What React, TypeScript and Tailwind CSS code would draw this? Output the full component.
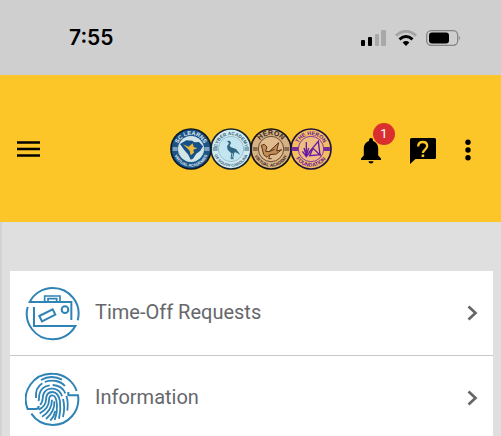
import React from "react";

type SealProps = {
  id: string;
  name: string;
  top: string;
  bottom: string;
  outer: string;
  band: string;
  center: string;
  ink: string;
  ring: string;
  topSize?: number;
  bottomSize?: number;
  children: React.ReactNode;
};

function Seal({ id, name, top, bottom, outer, band, center, ink, ring, topSize = 14, bottomSize = 11, children }: SealProps) {
  return (
    <svg viewBox="0 0 126 126" className="-mr-0.5 h-[42px] w-[42px] shrink-0" role="img" aria-label={name}>
      <defs>
        <path id={id + "-t"} d="M21 63a42 42 0 0 1 84 0" />
        <path id={id + "-b"} d="M10 63a53 53 0 0 0 106 0" />
      </defs>
      <circle cx="63" cy="63" r="60" fill={band} stroke={outer} strokeWidth="5" />
      <circle cx="63" cy="63" r="38" fill={center} stroke={ring} strokeWidth="2.5" />
      <path d="M8 60h15M8 66h15M103 60h15M103 66h15" stroke={ink} strokeWidth="3" />
      <g fill={ink} fontWeight="700" textAnchor="middle" className="font-['Liberation_Sans',sans-serif]">
        <text fontSize={topSize}>
          <textPath href={"#" + id + "-t"} startOffset="50%">{top}</textPath>
        </text>
        <text fontSize={bottomSize}>
          <textPath href={"#" + id + "-b"} startOffset="50%">{bottom}</textPath>
        </text>
      </g>
      {children}
    </svg>
  );
}

function Seals() {
  return (
    <div className="flex pr-0.5">
      <Seal id="sc" name="SC Learns" top="SC LEARNS" bottom="VIRTUAL ACADEMIES" outer="#0c1a2b" band="#1c5486" center="#d3e6e6" ink="#e0edf2" ring="#d5e6ef" topSize={17} bottomSize={12}>
        <path d="M30 48l19-11 18 1 6 5 14-1 12 13-8 13-12 9-10 15-7 3-7-15-13-15z" fill="#155088" />
        <path d="M39 49l17 7 12-10 3 11 11 4-12 4 2 9-10 8-3-14-8-8z" fill="#e9b83c" />
      </Seal>
      <Seal id="cy" name="Cyber Academy of South Carolina" top="CYBER ACADEMY" bottom="OF SOUTH CAROLINA" outer="#14242e" band="#d3eaf1" center="#c3e5f0" ink="#31637c" ring="#8fb9ca" topSize={14} bottomSize={12}>
        <path d="M42 44l12-6 6 1 3 6-4 8 4 5 15 5 13 17-14-7-9 3-6-2-9-9-2-10 6-9-5-6z" fill="#2d6480" />
        <path d="M66 74l-3 18h8M71 75l-3 15" fill="none" stroke="#2d6480" strokeWidth="3" />
      </Seal>
      <Seal id="he" name="Heron Virtual Academy" top="HERON" bottom="VIRTUAL ACADEMY" outer="#16120f" band="#d6b184" center="#dfbb8f" ink="#3d291c" ring="#4d3524" topSize={21} bottomSize={13}>
        <path d="M34 52l9-3 8 8-4 13 10 1 29-27-6 25 15-4-16 13-20 2-8 8-10-8z" fill="#c08d58" stroke="#593115" strokeWidth="3" />
        <path d="M57 71l17-7M60 80l-4 12h9" fill="none" stroke="#593115" strokeWidth="3" />
      </Seal>
      <Seal id="fo" name="The Heron Foundation" top="THE HERON" bottom="FOUNDATION" outer="#211339" band="#f4bd60" center="#efbd83" ink="#6415a0" ring="#6c1fa5" topSize={16} bottomSize={16}>
        <path d="M49 42v46M42 60l7 22 7-22M37 70l12 16 12-16" fill="none" stroke="#6718a5" strokeWidth="4" />
        <path d="M56 74l29-34 5 41-21-20-10 22 34-3" fill="none" stroke="#6718a5" strokeWidth="4" />
        <path d="M5 60h20M5 66h20M101 60h20M101 66h20" stroke="#6415a0" strokeWidth="5" />
      </Seal>
    </div>
  );
}

function StatusBar() {
  return (
    <div className="flex h-[75px] items-center justify-between bg-[#cfcfcf] pr-10 pl-[69px] text-black">
      <time className="font-['Inter',sans-serif] text-[21px] leading-6 font-semibold">7:55</time>
      <div className="flex items-center gap-[9px]">
        <svg viewBox="0 0 25 16" className="h-4 w-[25px]" role="img" aria-label="Signal">
          <rect y="10" width="4" height="6" rx="1" />
          <rect x="7" y="7" width="4" height="9" rx="1" />
          <rect x="14" y="4" width="4" height="12" rx="1" fill="#a8a8a8" />
          <rect x="20" y="0" width="5" height="16" rx="1" fill="#a8a8a8" />
        </svg>
        <svg viewBox="0 0 22 16" className="h-4 w-[22px]" fill="none" role="img" aria-label="Wi-Fi">
          <path d="M1 5.600Q11-3 21 5.600" stroke="#a5a5a5" strokeWidth="3" />
          <path d="M4.500 9.300Q11 3.700 17.500 9.300" stroke="#000" strokeWidth="3" />
          <path d="M7.600 12.500Q11 9.700 14.400 12.500L11 16z" fill="#000" />
        </svg>
        <svg viewBox="0 0 35 16" className="h-4 w-[35px]" role="img" aria-label="Battery">
          <rect x=".7" y=".7" width="31" height="14.600" rx="4.500" fill="none" stroke="#858585" strokeWidth="1.300" />
          <rect x="3" y="2.500" width="20" height="11" rx="3" />
          <path d="M33 5.500q1.800 2.500 0 5z" fill="#777" />
        </svg>
      </div>
    </div>
  );
}

function Header() {
  return (
    <header className="flex h-[147px] items-center justify-between bg-[#fcc528] pr-[29px] pl-4">
      <button type="button" aria-label="Open menu" className="flex h-8 w-[25px] items-center">
        <svg viewBox="0 0 25 18" className="h-[18px] w-[25px]">
          <path d="M1 2.500h23M1 9h23M1 15.500h23" stroke="#000" strokeWidth="2.500" />
        </svg>
      </button>
      <div className="flex items-center gap-7">
        <Seals />
        <button type="button" aria-label="Notifications, 1 new" className="relative mt-1 h-[26px] w-[22px]">
          <svg viewBox="0 0 22 26" className="h-[26px] w-[22px]">
            <path d="M11 0a2 2 0 0 0-2 2v1C5.500 4 3.800 7.200 3.800 11v6.500L1 20.500V22h20v-1.500l-2.800-3V11c0-3.800-1.700-7-5.200-8V2a2 2 0 0 0-2-2zM8.500 23.300a2.500 2.300 0 0 0 5 0z" />
          </svg>
          <span className="absolute -top-[15px] left-[13px] flex h-[22px] w-[22px] items-center justify-center rounded-full bg-[#d9302f] font-['Roboto',sans-serif] text-[13px] leading-none text-white">1</span>
        </button>
        <button type="button" aria-label="Help" className="mt-1 h-[26px] w-[26px]">
          <svg viewBox="0 0 26 26" className="h-[26px] w-[26px]">
            <path d="M1.500 0h23A1.500 1.500 0 0 1 26 1.500v18a1.500 1.500 0 0 1-1.500 1.500H5.500L0 26V1.500A1.500 1.500 0 0 1 1.500 0z" />
            <path d="M8.200 8.500C8.200 5.500 10 4 12.700 4s4.500 1.700 4.500 4.100c0 3.200-4.300 3.700-4.300 6.900" fill="none" stroke="#fcc528" strokeWidth="2.300" />
            <rect x="11.600" y="16.500" width="2.600" height="2.500" fill="#fcc528" />
          </svg>
        </button>
        <button type="button" aria-label="More options" className="mt-0.5 h-[22px] w-2">
          <svg viewBox="0 0 8 22" className="h-[22px] w-2">
            <circle cx="4" cy="3.200" r="2.700" />
            <circle cx="4" cy="11" r="2.700" />
            <circle cx="4" cy="18.700" r="2.700" />
          </svg>
        </button>
      </div>
    </header>
  );
}

function SuitcaseIcon() {
  return (
    <svg viewBox="75 60 165 165" className="h-[55px] w-[55px] shrink-0" fill="none" stroke="#2f83b5" strokeWidth="6" aria-hidden="true">
      <path d="M233 163A77 77 0 0 0 158 66A77 77 0 0 0 89 108H214V162" />
      <path d="M83 123A77 77 0 0 0 157 220A77 77 0 0 0 226 180H102V123" />
      <path d="M134 107V90h46v17M144 107V98h26v9" strokeWidth="5" />
      <path d="M118 150l40-20 8 16-40 20z" />
      <circle cx="195" cy="131" r="10" />
    </svg>
  );
}

function FingerprintIcon() {
  return (
    <svg viewBox="75 60 165 165" className="h-[55px] w-[55px] shrink-0" fill="none" stroke="#2f83b5" strokeWidth="6" aria-hidden="true">
      <path d="M230 120A77 77 0 0 0 158 68A77 77 0 0 0 83 174H108Q116 174 116 165" />
      <path d="M205 123V133H234A77 77 0 0 1 158 222A77 77 0 0 1 94 188" />
      <g strokeWidth="5.500">
        <path d="M123 87q15-9 32-9 17 0 31 8" />
        <path d="M108 141c-2-20 6-36 19-44M134 93c24-9 48-3 61 12" />
        <path d="M115 150c4-7 1-14 4-23 4-13 15-22 30-24M158 102c18 1 32 10 38 25M199 135c5 13 5 29 3 44" />
        <path d="M120 161c11-8 6-19 10-30 4-12 15-19 28-18 15 1 24 10 28 23M189 144c5 18 4 37 0 54" />
        <path d="M116 176c14-6 21-15 22-29 0-15 7-24 19-24 14 0 20 12 23 28 2 17 1 35-3 52" />
        <path d="M119 187c18-9 28-20 28-39 0-9 4-15 10-15 9 0 13 12 14 29 1 17-2 32-7 45" />
        <path d="M126 197c19-12 30-27 30-51M138 204c18-16 27-34 25-53M151 209c8-9 13-19 15-29" />
      </g>
    </svg>
  );
}

function MenuRow({ icon, label }: { icon: React.ReactNode; label: string }) {
  return (
    <a href="#" className="flex h-[85px] items-center border-b border-[#c8c8c8] pr-[15px] pl-[15px]">
      {icon}
      <span className="min-w-0 flex-1 pb-0.5 pl-[15px] font-['Roboto',sans-serif] text-[20px] leading-7 text-[#66676b]">{label}</span>
      <svg viewBox="0 0 11 16" className="h-4 w-[11px]" fill="none" aria-hidden="true">
        <path d="M1.500 1.500L8.500 8l-7 6.500" stroke="#666" strokeWidth="2.700" />
      </svg>
    </a>
  );
}

export default function App() {
  return (
    <div className="flex h-screen flex-col overflow-hidden bg-[#dfdfdf]">
      <div className="shrink-0">
        <StatusBar />
        <Header />
      </div>
      <main className="min-h-0 flex-1 overflow-hidden border-l-2 border-[#d3d3d3] pt-[49px] pr-2 pl-2">
        <nav aria-label="Employee services" className="bg-white">
          <MenuRow icon={<SuitcaseIcon />} label="Time-Off Requests" />
          <MenuRow icon={<FingerprintIcon />} label="Information" />
        </nav>
      </main>
    </div>
  );
}
